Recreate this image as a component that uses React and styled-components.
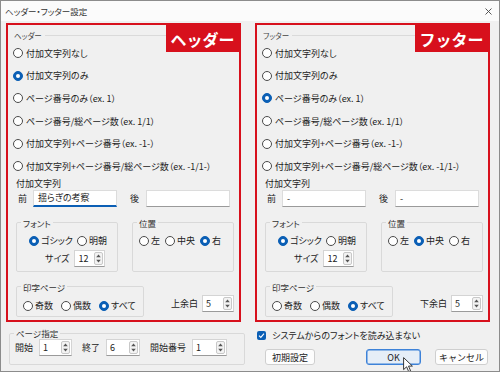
import React from 'react';
import styled, { createGlobalStyle } from 'styled-components';

const RED = '#d7101c';
const BLUE = '#0b5fb5';

const Global = createGlobalStyle`
  html, body { margin: 0; padding: 0; background: #ffffff; }
  body {
    font-family: "Noto Sans CJK JP", "Noto Sans", sans-serif;
    font-feature-settings: "palt";
    color: #222;
  }
  * { box-sizing: border-box; }
`;

const Window = styled.div`
  position: relative;
  width: 500px;
  height: 372px;
  border: 1px solid #8c8c8c;
  background: #f0f0f0;
  display: flex;
  flex-direction: column;
  overflow: hidden;
`;

const TitleBar = styled.div`
  flex: none;
  height: 20px;
  background: #fbfbfb;
  display: flex;
  align-items: center;
  justify-content: space-between;
  padding: 0 7px 0 4px;
`;

const Title = styled.span`
  font-size: 8.5px;
  color: #333;
  line-height: 1;
`;

const Body = styled.div`
  flex: 1;
  display: grid;
  grid-template-columns: 235px 235px;
  column-gap: 14px;
  padding: 2px 0 0 5px;
`;

const Column = styled.div`
  display: flex;
  flex-direction: column;
`;

const RedBox = styled.div`
  position: relative;
  height: 299px;
  border: 2px solid ${RED};
  padding: 3px 5px 0 5px;
  display: flex;
  flex-direction: column;
`;

const Tab = styled.div`
  position: absolute;
  top: 0;
  right: 0;
  width: 73px;
  height: 27px;
  background: ${RED};
  color: #fff;
  font-size: 16px;
  font-weight: 700;
  font-feature-settings: normal;
  display: flex;
  align-items: center;
  justify-content: center;
  line-height: 1;
`;

const SectionHead = styled.div`
  height: 14px;
  display: flex;
  align-items: center;
  gap: 3px;
  padding-left: 1px;
  font-size: 7.5px;
  color: #444;
  &::after {
    content: '';
    flex: 1;
    height: 1px;
    background: #dadada;
  }
`;

const RadioList = styled.div`
  display: flex;
  flex-direction: column;
`;

const RadioRow = styled.div`
  height: 22.6px;
  display: flex;
  align-items: center;
  gap: 3px;
  font-size: 9px;
  white-space: nowrap;
`;

const Circle = styled.span`
  flex: none;
  width: 10px;
  height: 10px;
  border-radius: 50%;
  border: 1px solid ${(p) => (p.$on ? BLUE : '#4a4a4a')};
  background: ${(p) => (p.$on ? BLUE : '#fff')};
  display: inline-flex;
  align-items: center;
  justify-content: center;
  &::after {
    content: '';
    display: ${(p) => (p.$on ? 'block' : 'none')};
    width: 4px;
    height: 4px;
    border-radius: 50%;
    background: #fff;
  }
`;

const Caption = styled.div`
  height: 12px;
  padding-left: 3px;
  font-size: 9px;
  line-height: 12px;
`;

const InputRow = styled.div`
  height: 17px;
  display: flex;
  align-items: center;
  padding-left: 5px;
  font-size: 9px;
`;

const FieldLabel = styled.span`
  width: ${(p) => p.$w}px;
  flex: none;
`;

const TextField = styled.div`
  width: ${(p) => p.$w}px;
  height: 17px;
  flex: none;
  background: #fff;
  border: 1px solid #dcdcdc;
  border-bottom: ${(p) => (p.$focus ? `2px solid ${BLUE}` : '1px solid #9a9a9a')};
  font-size: 9px;
  padding: 0 4px;
  display: flex;
  align-items: center;
  white-space: nowrap;
`;

const GroupRow = styled.div`
  display: flex;
  gap: 14px;
  margin-top: ${(p) => p.$mt}px;
  padding-left: 3px;
`;

const Group = styled.fieldset`
  margin: 0;
  padding: 0;
  min-width: 0;
  width: ${(p) => p.$w}px;
  height: ${(p) => p.$h}px;
  border: 1px solid #d9d9d9;
  border-radius: 2px;
  flex: none;
`;

const Legend = styled.legend`
  margin-left: 4px;
  padding: 0 2px;
  font-size: 8.5px;
  line-height: 10px;
  color: #333;
`;

const OptRow = styled.div`
  height: 14px;
  margin-top: ${(p) => p.$mt || 0}px;
  padding-left: ${(p) => p.$pl}px;
  display: flex;
  align-items: center;
  gap: ${(p) => p.$gap}px;
  font-size: 9px;
  white-space: nowrap;
`;

const Opt = styled.span`
  display: inline-flex;
  align-items: center;
  gap: 2px;
`;

const SizeRow = styled.div`
  height: 17px;
  margin-top: 2px;
  padding-left: 28px;
  display: flex;
  align-items: center;
  gap: 5px;
  font-size: 9px;
`;

const PrintRow = styled.div`
  display: flex;
  align-items: flex-end;
  margin-top: 10px;
  padding-left: 3px;
`;

const MarginBox = styled.div`
  margin-left: auto;
  padding-bottom: 5px;
  display: flex;
  align-items: center;
  gap: 4px;
  font-size: 9px;
`;

const SpinBox = styled.div`
  width: ${(p) => p.$w}px;
  height: 17px;
  flex: none;
  background: #fff;
  border: 1px solid #d4d4d4;
  border-bottom-color: #9a9a9a;
  display: flex;
  align-items: center;
  justify-content: space-between;
  padding: 0 1px 0 3px;
  font-size: 9px;
`;

const SpinBtn = styled.span`
  width: 9px;
  height: 13px;
  border: 1px solid #c8c8c8;
  border-radius: 2px;
  background: #f3f3f3;
  display: flex;
  align-items: center;
  justify-content: center;
`;

const PageGroup = styled(Group)`
  margin: 6px 0 0 3px;
  width: 236px;
  height: 37px;
`;

const PageRow = styled.div`
  height: 17px;
  margin-top: 1px;
  padding-left: 5px;
  display: flex;
  align-items: center;
  font-size: 9px;
`;

const PageLabel = styled.span`
  margin-left: ${(p) => p.$ml}px;
  margin-right: 6px;
`;

const CheckRow = styled.label`
  margin-top: 7px;
  height: 12px;
  padding-left: 2px;
  display: flex;
  align-items: center;
  gap: 6px;
  font-size: 9px;
`;

const CheckBox = styled.span`
  width: 9px;
  height: 9px;
  border-radius: 2px;
  background: ${BLUE};
  display: flex;
  align-items: center;
  justify-content: center;
`;

const ButtonRow = styled.div`
  margin-top: 8px;
  display: flex;
  align-items: center;
  padding: 0 2px 0 10px;
`;

const Button = styled.button`
  width: ${(p) => p.$w}px;
  height: 16px;
  margin-left: ${(p) => p.$ml || '0'};
  padding: 0;
  font-family: inherit;
  font-size: 9px;
  color: #222;
  border-radius: 3px;
  border: 1px solid ${(p) => (p.$primary ? '#3d82d8' : '#cfcfcf')};
  box-shadow: ${(p) => (p.$primary ? 'inset 0 0 0 0.5px #3d82d8' : 'none')};
  background: ${(p) => (p.$primary ? '#e6eef7' : '#fdfdfd')};
  line-height: 1;
`;

const Pointer = styled.svg`
  position: absolute;
  left: 402px;
  top: 356px;
`;

function Radio({ on, children }) {
  return (
    <Opt>
      <Circle $on={on} />
      {children}
    </Opt>
  );
}

function Spin({ w, value }) {
  return (
    <SpinBox $w={w}>
      <span>{value}</span>
      <SpinBtn>
        <svg width="7" height="11" viewBox="0 0 7 11">
          <polygon points="1.2,4.3 3.5,1.6 5.8,4.3" fill="#555" />
          <polygon points="1.2,6.7 3.5,9.4 5.8,6.7" fill="#555" />
        </svg>
      </SpinBtn>
    </SpinBox>
  );
}

const OPTIONS = [
  '付加文字列なし',
  '付加文字列のみ',
  'ページ番号のみ（ex. 1）',
  'ページ番号/総ページ数（ex. 1/1）',
  '付加文字列+ページ番号（ex. -1-）',
  '付加文字列+ページ番号/総ページ数（ex. -1/1-）',
];

function Panel({ head, tab, selected, front, frontFocus, back, pos, marginLabel }) {
  return (
    <RedBox>
      <Tab>{tab}</Tab>
      <SectionHead>{head}</SectionHead>
      <RadioList>
        {OPTIONS.map((o, i) => (
          <RadioRow key={o}>
            <Circle $on={i === selected} />
            {o}
          </RadioRow>
        ))}
      </RadioList>
      <Caption>付加文字列</Caption>
      <InputRow>
        <FieldLabel $w={15}>前</FieldLabel>
        <TextField $w={84} $focus={frontFocus}>{front}</TextField>
        <FieldLabel $w={16} style={{ marginLeft: 13 }}>後</FieldLabel>
        <TextField $w={84}>{back}</TextField>
      </InputRow>
      <GroupRow $mt={11}>
        <Group $w={102} $h={54}>
          <Legend>フォント</Legend>
          <OptRow $mt={6} $pl={12} $gap={4}>
            <Radio on>ゴシック</Radio>
            <Radio>明朝</Radio>
          </OptRow>
          <SizeRow>
            サイズ
            <Spin w={31} value="12" />
          </SizeRow>
        </Group>
        <Group $w={102} $h={54}>
          <Legend>位置</Legend>
          <OptRow $mt={6} $pl={6} $gap={5}>
            <Radio on={pos === 0}>左</Radio>
            <Radio on={pos === 1}>中央</Radio>
            <Radio on={pos === 2}>右</Radio>
          </OptRow>
        </Group>
      </GroupRow>
      <PrintRow>
        <Group $w={128} $h={35}>
          <Legend>印字ページ</Legend>
          <OptRow $mt={7} $pl={6} $gap={8}>
            <Radio>奇数</Radio>
            <Radio>偶数</Radio>
            <Radio on>すべて</Radio>
          </OptRow>
        </Group>
        <MarginBox>
          {marginLabel}
          <Spin w={32} value="5" />
        </MarginBox>
      </PrintRow>
    </RedBox>
  );
}

export default function App() {
  return (
    <>
      <Global />
      <Window>
        <TitleBar>
          <Title>ヘッダー・フッター設定</Title>
          <svg width="7" height="7" viewBox="0 0 7 7">
            <path d="M0.5 0.5 L6.5 6.5 M6.5 0.5 L0.5 6.5" stroke="#444" strokeWidth="0.9" />
          </svg>
        </TitleBar>
        <Body>
          <Column>
            <Panel
              head="ヘッダー"
              tab="ヘッダー"
              selected={1}
              front="揺らぎの考察"
              frontFocus
              back=""
              pos={2}
              marginLabel="上余白"
            />
            <PageGroup>
              <Legend>ページ指定</Legend>
              <PageRow>
                <PageLabel $ml={0}>開始</PageLabel>
                <Spin w={33} value="1" />
                <PageLabel $ml={10}>終了</PageLabel>
                <Spin w={34} value="6" />
                <PageLabel $ml={10}>開始番号</PageLabel>
                <Spin w={35} value="1" />
              </PageRow>
            </PageGroup>
          </Column>
          <Column>
            <Panel
              head="フッター"
              tab="フッター"
              selected={2}
              front="-"
              back="-"
              pos={1}
              marginLabel="下余白"
            />
            <CheckRow>
              <CheckBox>
                <svg width="7" height="7" viewBox="0 0 7 7">
                  <path d="M1 3.7 L2.8 5.4 L6 1.6" fill="none" stroke="#fff" strokeWidth="1.1" />
                </svg>
              </CheckBox>
              システムからのフォントを読み込まない
            </CheckRow>
            <ButtonRow>
              <Button $w={50}>初期設定</Button>
              <Button $w={55} $ml="auto" $primary>OK</Button>
              <Button $w={53} $ml="14px">キャンセル</Button>
            </ButtonRow>
          </Column>
        </Body>
        <Pointer width="11" height="16" viewBox="0 0 11 16">
          <path d="M0.6 0.6 L0.6 12.6 L3.6 9.8 L5.7 14.6 L7.6 13.8 L5.5 9.1 L9.4 9.1 Z" fill="#fff" stroke="#222" strokeWidth="0.9" strokeLinejoin="round" />
        </Pointer>
      </Window>
    </>
  );
}
